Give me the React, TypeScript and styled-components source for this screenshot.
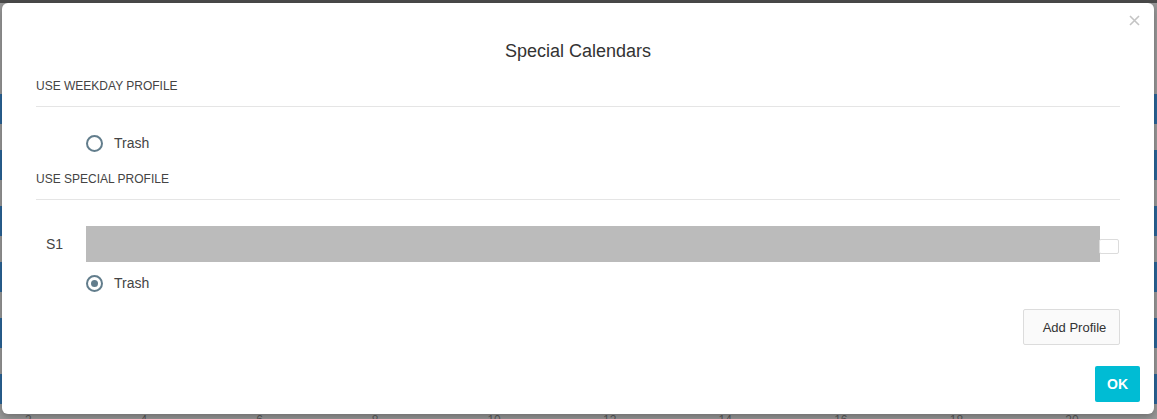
import React from "react";
import styled, { createGlobalStyle } from "styled-components";

const Global = createGlobalStyle`
  html, body { margin: 0; padding: 0; }
  body {
    width: 1157px;
    height: 419px;
    overflow: hidden;
    background: #9a9a9a;
    font-family: "Liberation Sans", Arial, sans-serif;
  }
  #root { position: relative; width: 1157px; height: 419px; }
`;

/* ---------- dimmed page behind the dialog ---------- */
const Page = styled.div`
  display: flex;
  flex-direction: column;
  width: 1157px;
  height: 419px;
  background: #9a9a9a;
`;

const TopStrip = styled.div`
  height: 3px;
  background: #4b4b4b;
  flex: none;
`;

const Chart = styled.div`
  display: flex;
  flex-direction: column;
  gap: 26px;
  padding-top: 91px;
  height: 320px;
  flex: none;
`;

const Bar = styled.div`
  height: 30px;
  background: #2b679b;
`;

const Axis = styled.div`
  display: flex;
  padding-left: 25px;
`;

const Tick = styled.span`
  flex: none;
  width: 115.6px;
  font-size: 12px;
  line-height: 12px;
  color: #5a5a5a;
`;

/* ---------- dialog ---------- */
const Modal = styled.div`
  position: absolute;
  left: 2px;
  top: 3px;
  width: 1152px;
  height: 411px;
  background: #fff;
  border-radius: 6px;
  box-shadow: 0 3px 9px rgba(0, 0, 0, 0.3);
  display: flex;
  flex-direction: column;
  color: #333;
`;

const CloseRow = styled.div`
  height: 34px;
  display: flex;
  justify-content: flex-end;
  align-items: center;
  padding-right: 14px;
`;

const CloseButton = styled.button`
  border: 0;
  background: none;
  padding: 0;
  width: 11px;
  height: 11px;
  display: flex;
  cursor: pointer;
`;

const Title = styled.h4`
  margin: 0;
  height: 28px;
  line-height: 28px;
  text-align: center;
  font-size: 18px;
  font-weight: normal;
  color: #333;
`;

const Body = styled.div`
  display: flex;
  flex-direction: column;
  padding: 0 34px;
`;

const SectionLabel = styled.div<{ $top: number }>`
  margin-top: ${(p) => p.$top}px;
  font-size: 12px;
  line-height: 16px;
  color: #444;
  text-transform: uppercase;
  padding-bottom: 12px;
  border-bottom: 1px solid #e5e5e5;
`;

const RadioRow = styled.label<{ $top: number }>`
  margin-top: ${(p) => p.$top}px;
  display: flex;
  align-items: center;
  height: 20px;
  padding-left: 50px;
  gap: 11px;
  font-size: 14px;
  color: #444;
`;

const RadioCircle = styled.span<{ $checked?: boolean }>`
  box-sizing: border-box;
  width: 17px;
  height: 17px;
  border-radius: 50%;
  border: 2px solid #627d8c;
  display: flex;
  align-items: center;
  justify-content: center;
  &::after {
    content: "";
    width: 7px;
    height: 7px;
    border-radius: 50%;
    background: ${(p) => (p.$checked ? "#627d8c" : "transparent")};
  }
`;

const ProfileRow = styled.div`
  margin-top: 26px;
  display: flex;
  align-items: center;
  height: 36px;
`;

const ProfileName = styled.span`
  width: 50px;
  padding-left: 10px;
  box-sizing: border-box;
  font-size: 14px;
  color: #444;
  flex: none;
`;

const ProfileBar = styled.div`
  flex: 1;
  height: 36px;
  background: #bbbbbb;
`;

const ColorBox = styled.div`
  width: 20px;
  height: 15px;
  margin-left: -1px;
  margin-right: 1px;
  margin-top: 5px;
  box-sizing: border-box;
  border: 1px solid #dcdcdc;
  border-radius: 2px;
  background: #fff;
  flex: none;
`;

const Actions = styled.div`
  margin-top: 16px;
  display: flex;
  justify-content: flex-end;
`;

const SecondaryButton = styled.button`
  width: 97px;
  height: 36px;
  box-sizing: border-box;
  border: 1px solid #dcdcdc;
  border-radius: 2px;
  background: #fafafa;
  padding: 0 0 0 6px;
  font-family: "Liberation Sans", Arial, sans-serif;
  font-size: 13px;
  color: #333;
`;

const Footer = styled.div`
  margin-top: 21px;
  display: flex;
  justify-content: flex-end;
  padding-right: 14px;
`;

const PrimaryButton = styled.button`
  width: 45px;
  height: 36px;
  border: 0;
  border-radius: 2px;
  background: #00bcd4;
  color: #fff;
  font-family: "Liberation Sans", Arial, sans-serif;
  font-weight: bold;
  font-size: 14px;
  padding: 0;
`;

const ticks = [2, 4, 6, 8, 10, 12, 14, 16, 18, 20];

export default function App() {
  return (
    <>
      <Global />
      <Page>
        <TopStrip />
        <Chart>
          {Array.from({ length: 6 }).map((_, i) => (
            <Bar key={i} />
          ))}
        </Chart>
        <Axis>
          {ticks.map((t) => (
            <Tick key={t}>{t}</Tick>
          ))}
        </Axis>
      </Page>

      <Modal role="dialog">
        <CloseRow>
          <CloseButton aria-label="Close">
            <svg width="11" height="11" viewBox="0 0 11 11">
              <path d="M1 1 L10 10 M10 1 L1 10" stroke="#c4c4c4" strokeWidth="1.6" />
            </svg>
          </CloseButton>
        </CloseRow>
        <Title>Special Calendars</Title>
        <Body>
          <SectionLabel $top={13}>Use Weekday Profile</SectionLabel>
          <RadioRow $top={26}>
            <RadioCircle />
            Trash
          </RadioRow>
          <SectionLabel $top={18}>Use Special Profile</SectionLabel>
          <ProfileRow>
            <ProfileName>S1</ProfileName>
            <ProfileBar />
            <ColorBox />
          </ProfileRow>
          <RadioRow $top={11}>
            <RadioCircle $checked />
            Trash
          </RadioRow>
          <Actions>
            <SecondaryButton>Add Profile</SecondaryButton>
          </Actions>
        </Body>
        <Footer>
          <PrimaryButton>OK</PrimaryButton>
        </Footer>
      </Modal>
    </>
  );
}
